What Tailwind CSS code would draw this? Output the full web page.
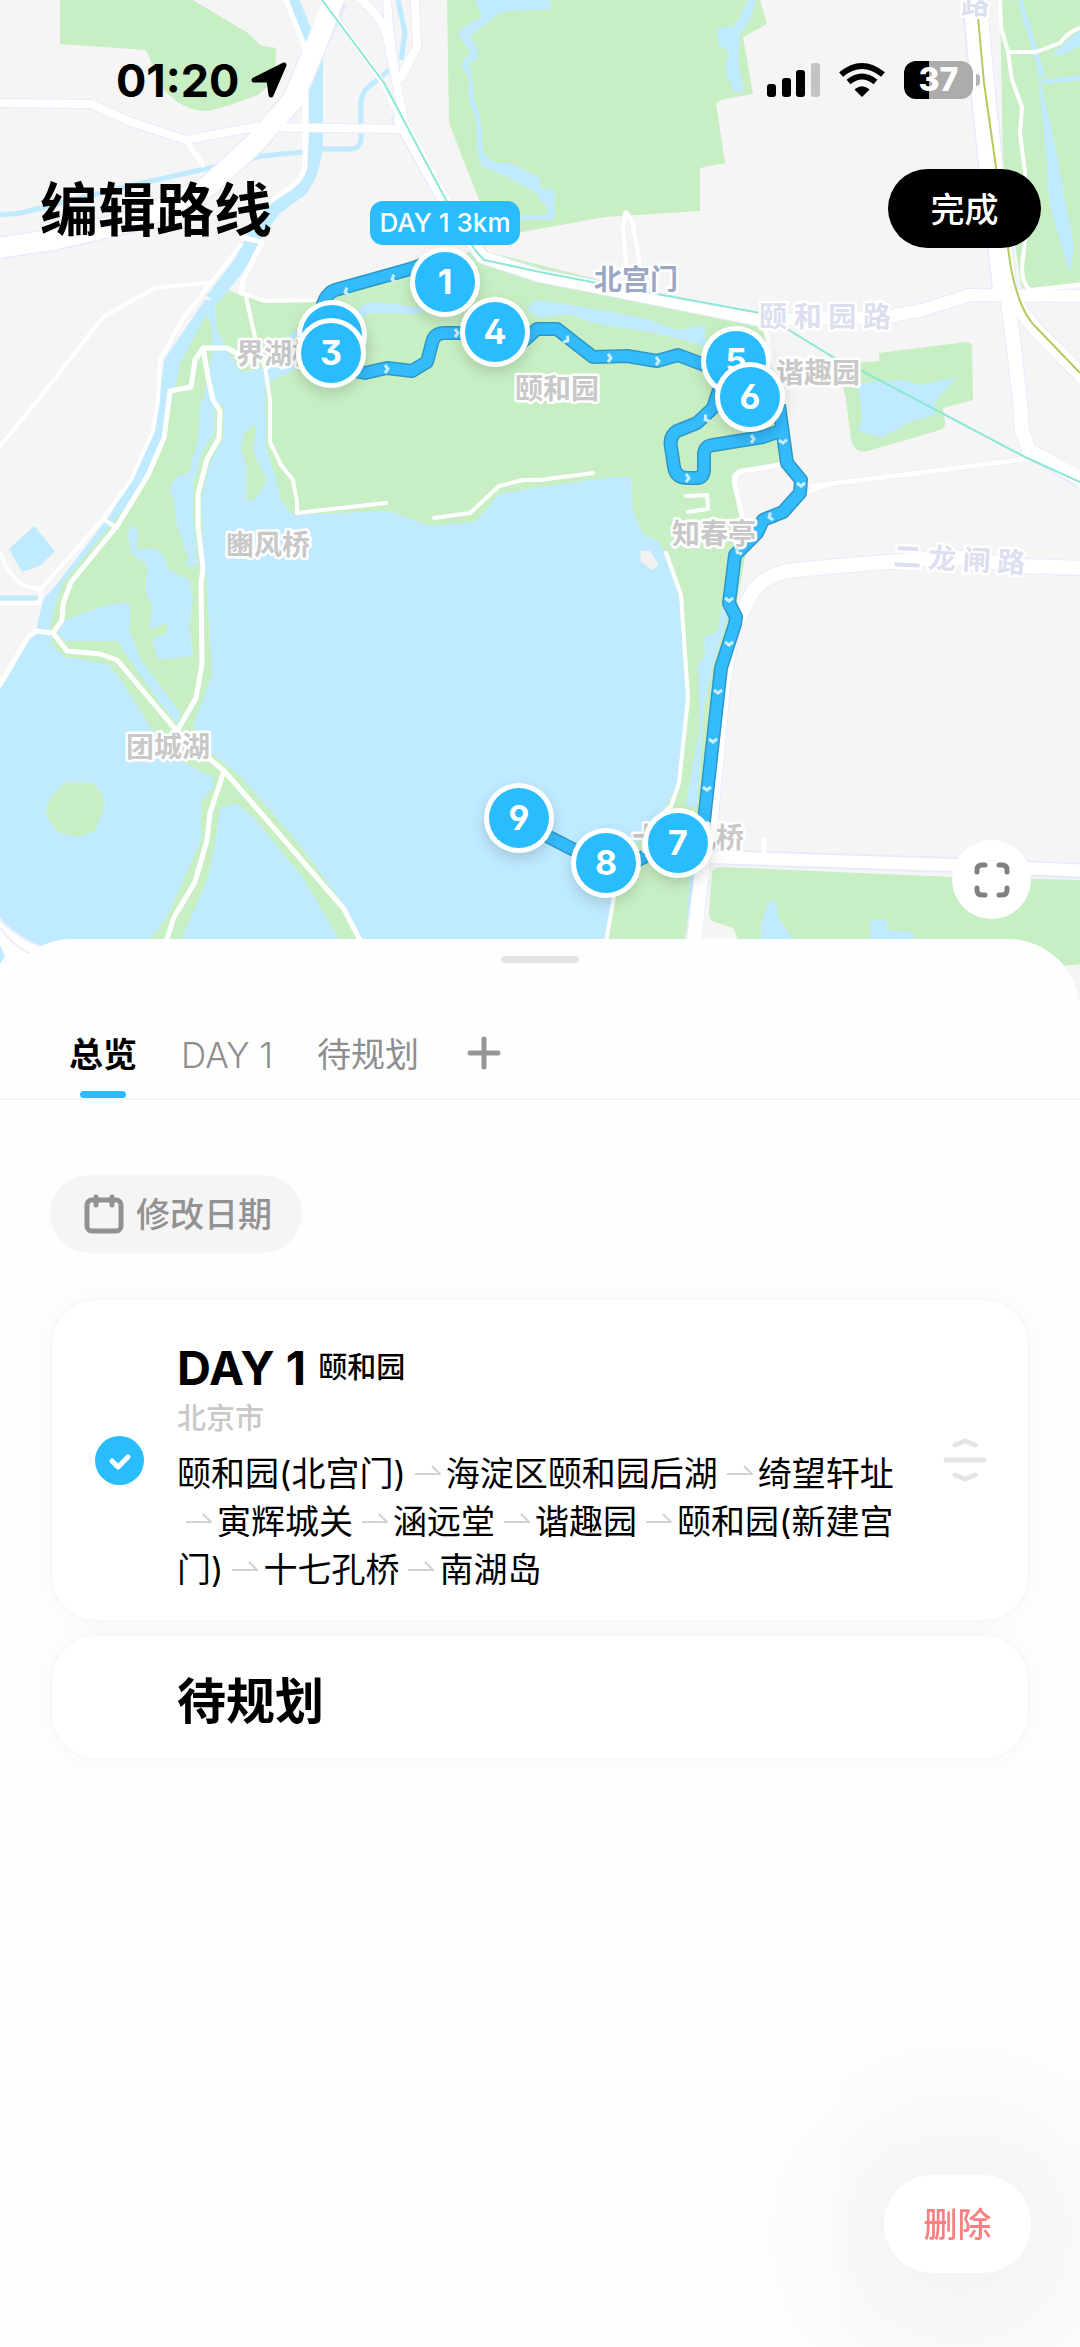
<!DOCTYPE html>
<html lang="zh-CN">
<head>
    <meta charset="UTF-8">
    <meta name="viewport" content="width=device-width, initial-scale=1.0">
    <title>编辑路线</title>
    <script src="https://cdn.jsdelivr.net/npm/@tailwindcss/browser@4"></script>
</head>
<body class="relative min-h-screen bg-[#fefefe] text-black font-['Inter','Noto_Sans_CJK_SC',sans-serif]">
    <!-- Map -->
    <section class="relative">
        <svg class="block w-full" viewBox="0 0 1080 1010" role="img" aria-label="颐和园路线地图">
            <defs>
                <filter id="pinShadow" x="-50%" y="-50%" width="200%" height="200%">
                    <feDropShadow dx="0" dy="6" stdDeviation="7" flood-color="#000" flood-opacity="0.15"/>
                </filter>
            </defs>
            <rect width="1080" height="1010" fill="#f5f5f5"/>

            <!-- Parks -->
            <g fill="#c8efc3">
                <path d="M60 0V44L146 50L153 66L162 88L176 101Q190 111 208 111L227 106L258 95L275 80L276 48L260 45L248 33L193 0Z"/>
                <path d="M447 0L449 123L479 200L500 225L517 233L605 217L700 211V168L725 163L716 103L724 99L753 94L743 37L767 24L760 0Z"/>
                <path d="M1000 0L1003 167L1022 290L1080 282V0Z"/>
                <path d="M862 362L879 361V353L966 342Q972 342 972 347L973 400L943 408L945 422Q946 428 940 430L868 451Q856 455 851 440L846 400L843 387Z"/>
                <path d="M712 872Q714 867 722 867L953 877L1080 880V964L1062 966H760L738 939L733 928L715 922Q709 920 709 912Z"/>
            </g>

            <!-- Lakes of the palace -->
            <path fill="#bfeaff" d="M0 685L26 640L36 630L43 600L60 580L110 515L140 465L158 410L164 360L205 300L300 300L700 440L700 1010H0Z"/>
            <g fill="#c8efc3">
                <path d="M220 287L205 317L180 364L172 400L164 442L148 480L110 526L62 584L57 599L50 626L52 645L65 657L107 664L119 677L153 731L186 764L213 777V787L201 802V840L167 917L150 939H182L188 924L208 878L217 832L220 808L236 803L255 819L303 878L339 939H362L344 905L296 840L241 777L210 752L193 725L196 718L212 675L207 591L203 545L201 500L210 462L224 438L225 405L222 370L240 373L268 367L290 335L330 330L265 385L266 446L275 476L281 500L293 515L389 511L430 526L475 522L499 494L540 487L605 478L631 477L633 511L643 534L657 540L667 557L679 599L686 702L678 783L664 810L643 829L614 897L605 939H686L691 861L702 821L722 668L736 607L746 553L757 526L740 515L733 473L788 465L774 400L769 333L760 320L500 255L476 250L413 268L320 301L265 301L241 295Z"/>
                <path d="M65 782L93 783L103 795L105 806L95 831L79 837L57 832L45 813L50 798Z"/>
            </g>
            <g fill="#bfeaff">
                <path d="M205 305L215 300L217 330L227 350L241 373L268 367L290 335L310 320L330 340L290 372L262 385L238 400L238 409L262 406L265 446L262 520L224 520L224 405L203 400L213 350L212 330Z"/>
                <path d="M201 400L198 438L189 473L176 477L169 490L174 500L177 526L188 557L186 566H198L193 515V484L203 450L214 434V395Z"/>
                <path d="M65 620L100 607L127 602L131 608L129 630L141 660L181 714L177 723L162 706L117 641H65L57 632Z"/>
                <path d="M131 524L139 532L136 549L155 549L163 555L169 570L189 580L193 600L189 625L193 656L158 660L152 639L167 633V623L148 630L153 607L145 591L147 565L131 553L128 534Z"/>
                <path d="M360 307L370 302L395 304L425 309L418 314L372 313L358 319Z"/>
                <path d="M527 310L533 300L560 303L588 308L643 318L678 330L705 325V347L685 340L654 333L592 323L570 314L540 318Z"/>
                <path d="M722 607L717 632L704 637L705 656L698 664L700 729L693 764L686 806H697L704 706L712 668L728 615Z"/>
                <path d="M475 0H550V10L540 10L515 11L499 13L486 24L470 36L478 50L477 60L468 63L472 75L474 100L480 115L484 155L496 163L510 163L540 178V195L520 184L505 176L482 166L477 150L476 120L468 95L469 78L461 66L465 57L472 55L458 34L462 28L482 17Z"/>
                <path d="M540 188L555 190L554 220H514V216L546 215L548 207L538 198Z"/>
                <path d="M717 28L735 26L748 0H756L750 20L740 35L738 60L744 92L734 93L725 70L729 52L718 45Z"/>
                <path d="M1036 60L1056 150L1074 247L1070 273L1050 207L1044 133Z"/>
                <path d="M1052 54L1080 30V46L1062 55Z"/>
                <path d="M857 383L902 380L920 385L957 377L936 400L934 415L910 422L881 438L858 431L862 419L860 400Z"/>
                <path d="M761 939V924L767 905L776 899L778 917L793 939Z"/>
                <path d="M870 939V920L886 919L888 930L912 932L914 939Z"/>
                <path d="M9 549L34 526L55 551L41 565L22 572Z"/>
            </g>
            <path fill="#c8efc3" d="M257 423L253 450L267 480L255 500H246V465L241 450L244 433Z"/>
            <path fill="#f1f1f1" d="M640 551H650L659 565L653 570L641 562Z"/>

            <!-- Rivers -->
            <g fill="none" stroke="#bfeaff">
                <path stroke-width="14" d="M292 0L305 32L316 62V130Q317 170 300 190L275 208L255 235L240 264L212 300"/>
                <path stroke-width="5" d="M398 0L405 33L401 60M389 70L365 90L361 100V140Q359 149 351 149H322M303 152L262 156L213 167L121 188L21 213L0 215M0 598H38M1020 0L1043 77M1042 82L1080 78"/>
            </g>

            <!-- Road casings -->
            <g fill="none" stroke="#e7ecfd" stroke-linejoin="round">
                <path stroke-width="23" d="M337 0L317 43L293 100L255 143L207 187L138 220L52 240L0 248"/>
                <path stroke-width="10" d="M0 103L91 104L131 122L186 140L255 127L403 129M362 0Q384 20 388 40L396 80L405 127M387 0L389 30L396 80M415 0L417 47L401 77"/>
                <path stroke-width="14" d="M396 115L448 207L482 257L540 276L592 286L760 320L888 317L922 310L970 295L1080 296"/>
                <path stroke-width="26" d="M974 0L984 100L998 233L1005 293"/>
                <path stroke-width="16" d="M1005 280L1013 340L1020 400L1022 431L1029 450L1080 480M1005 290L1036 330L1080 375M740 616L753 591Q768 573 795 570L850 565L953 557L1022 566L1080 568M712 857L953 865L1080 871M702 878L693 939"/>
                <path stroke-width="10" d="M736 625L726 687L712 840L702 878"/>
                <path stroke-width="6" d="M626 263L623 227L626 213L633 223L640 267M812 486L919 473L1026 459M781 465L743 471Q733 473 735 484L742 515M800 495L826 485M766 330L774 367M324 0L379 77L400 120"/>
            </g>

            <!-- Roads -->
            <g fill="none" stroke="#fff" stroke-linejoin="round" stroke-linecap="round">
                <path stroke-width="20" d="M337 -10L317 43L293 100L255 143L207 187L138 220L52 240L-10 249"/>
                <path stroke-width="8" d="M0 103L91 104L131 122L186 140L255 127L403 129M362 0Q384 20 388 40L396 80L405 127M387 0L389 30L396 80M415 0L417 47L401 77M736 625L726 687L712 840L702 878"/>
                <path stroke-width="12" d="M400 120L448 207L482 257L540 276L592 286L760 320L888 317L922 310L970 295L1080 296M712 857L953 865L1090 871"/>
                <path stroke-width="23" d="M974 -10L984 100L998 233L1005 290"/>
                <path stroke-width="14" d="M1005 280L1013 340L1020 400L1022 431L1029 450L1090 484M1005 290L1036 330L1090 384M740 616L753 591Q768 573 795 570L850 565L953 557L1022 566L1090 568M702 870L693 950"/>
                <path stroke-width="5" d="M286 0L305 47V167Q302 180 290 188L262 207L252 222M188 143L203 165M244 238L262 242L243 280L241 293M324 0L379 77L400 120M626 263L623 227L626 213L633 223L640 267M812 486L919 473L1026 459M781 465L743 471Q733 473 735 484L742 515M800 495L826 485M766 330L774 367M764 840V857"/>
                <path stroke-width="4" d="M241 245L213 280L182 320L160 360L158 400L153 431L131 480L103 519L41 589L40 603H0M0 553Q8 574 21 584L40 590M103 519L117 528M207 283L155 288L103 317L38 400L0 446"/>
                <path stroke-width="5" d="M169 400L164 438L148 475L117 526L71 582L63 604L62 620L53 633M169 400L170 391L191 387L195 360L203 348H227L240 355M203 348L208 377L213 400L220 411L219 438L207 459L198 494V526L203 568L201 584L202 664L196 698L177 731"/>
                <path stroke-width="5" d="M0 685L28 637L36 631L53 633L67 651L100 654L117 660L177 731L224 771L241 790L344 909L364 948M224 771L210 813L207 840L195 882L174 917L164 948"/>
                <path stroke-width="4" d="M241 293L265 301L320 300M246 297L255 337L265 367L270 400V442L281 465L293 480L297 502V513L350 507L386 503M434 518L470 513L499 486L523 480H540L593 473M666 553L681 595L688 698L679 783L671 806L640 835M614 897L605 948M686 496L707 495L708 509L688 512"/>
                <path stroke-width="4" d="M1000 0L1001 27L1008 52L1012 80L1022 107L1020 133L1025 173V240L1022 267Q1022 284 1030 290L1080 285M1008 52L1036 52L1060 43Q1068 32 1080 28"/>
            </g>
            <!-- Corner interchange -->
            <path fill="#fff" d="M0 918Q20 940 42 946V1010H0Z"/>
            <path fill="none" stroke="#eaeefa" stroke-width="2" d="M0 920Q18 938 42 947M0 928Q14 946 30 954"/>
            <path fill="#bfeaff" d="M0 945L5 956L0 964Z"/>

            <!-- Rail lines -->
            <path fill="none" stroke="#8ce8d4" stroke-width="2" d="M322 0L384 83L446 200L475 250L484 260L540 272L597 283L760 313L784 327L833 357L864 372L917 400L1025 457L1080 482"/>
            <path fill="none" stroke="#b3cc5c" stroke-width="2" d="M978 17L984 83L996 167L1008 247Q1014 300 1032 323L1080 373"/>

            <!-- Route -->
            <g fill="none" stroke-linejoin="round">
                <path stroke="#2d97c9" stroke-width="14" d="M430 262L410 269L335 290Q322 295 320 320M355 371L365 373L387 368L412 371L427 362L432 343Q434 333 445 333H470M520 344L537 329H557L593 357L627 356L657 361L678 355L715 369M719 390L713 408L697 423L677 431Q669 436 671 447L674 467Q676 478 688 478H698Q704 477 704 468V455Q704 446 713 445L763 437L780 431M779 405L787 463L801 480L800 493L783 512L763 520L757 533L735 555L729 603L736 617L735 624L721 668L703 830M547 836L580 853M630 864L652 853"/>
                <path stroke="#33bbfc" stroke-width="11" d="M430 262L410 269L335 290Q322 295 320 320M355 371L365 373L387 368L412 371L427 362L432 343Q434 333 445 333H470M520 344L537 329H557L593 357L627 356L657 361L678 355L715 369M719 390L713 408L697 423L677 431Q669 436 671 447L674 467Q676 478 688 478H698Q704 477 704 468V455Q704 446 713 445L763 437L780 431M779 405L787 463L801 480L800 493L783 512L763 520L757 533L735 555L729 603L736 617L735 624L721 668L703 830M547 836L580 853M630 864L652 853"/>
            </g>

            <!-- Place names -->
            <g class="text-[28px] font-bold" fill="#c8c8c8" stroke="#fff" stroke-width="5" stroke-linejoin="round" paint-order="stroke">
                <text x="236" y="364">界湖桥</text>
                <text x="515" y="399">颐和园</text>
                <text x="776" y="383">谐趣园</text>
                <text x="226" y="555">豳风桥</text>
                <text x="126" y="757">团城湖</text>
                <text x="672" y="544">知春亭</text>
                <text x="632" y="848">十七孔桥</text>
                <text x="594" y="290" fill="#9ca7c4">北宫门</text>
                <g fill="#dcdff0">
                    <text x="759" y="327">颐 和 园 路</text>
                    <text x="893" y="566" transform="rotate(3 894 566)">二 龙 闸 路</text>
                    <text x="961" y="14">路</text>
                </g>
            </g>
            <g id="chevrons" fill="none" stroke="#c9eeff" stroke-width="3"></g>

            <!-- Pins -->
            <g id="pins"></g>
            <rect x="370" y="201" width="150" height="44" rx="13" fill="#29bcfe"/>
            <text class="text-[26px] font-medium" x="445" y="232" text-anchor="middle" fill="#fff">DAY 1 3km</text>
        </svg>

        <header class="absolute inset-x-0 top-0">
            <!-- Status bar -->
            <div class="mt-[54px] flex h-[52px] items-center justify-between pr-[100px] pl-[116px]">
                <div class="flex items-center gap-3">
                    <span class="text-[45px] leading-none font-bold">01:20</span>
                    <svg class="h-9 w-9" viewBox="0 0 36 36" stroke="#000" stroke-width="5" stroke-linejoin="round"><path d="M3 18L33 3L20 33L18 18Z"/></svg>
                </div>
                <div class="flex items-center gap-[18px]">
                    <svg class="h-9 w-[54px]" viewBox="0 0 54 36">
                        <rect x="1" y="22" width="9" height="13" rx="3"/>
                        <rect x="16" y="16" width="9" height="19" rx="3"/>
                        <rect x="30" y="8" width="9" height="27" rx="3"/>
                        <rect x="45" y="1" width="9" height="34" rx="3" fill="#c4c4c4"/>
                    </svg>
                    <svg class="h-9 w-12" viewBox="0 0 48 36" fill="none" stroke="#000" stroke-width="6">
                        <path d="M3 12.500Q24 -4.500 45 12.500M10.500 20Q24 9 37.500 20"/>
                        <path d="M24 34L17.500 27.500Q24 22.500 30.500 27.500Z" fill="#000" stroke-width="1.500" stroke-linejoin="round"/>
                    </svg>
                    <div class="flex items-center gap-[3px]">
                        <span class="flex h-[38px] w-[69px] items-center justify-center rounded-xl bg-linear-to-r from-black from-36% to-[#acacac] to-36% text-[32px] leading-none font-extrabold text-white">37</span>
                        <span class="h-3 w-1 rounded-r-full bg-[#b4b4b4]"></span>
                    </div>
                </div>
            </div>
            <div class="mt-[62px] flex h-20 items-center justify-between pr-[39px] pl-10">
                <h1 class="pt-1 text-[58px] leading-none font-bold">编辑路线</h1>
                <button type="button" class="h-[79px] w-[153px] rounded-full bg-black pt-[2px] text-[34px] font-medium text-white">完成</button>
            </div>
        </header>

        <button type="button" aria-label="全屏" class="absolute right-[49px] bottom-[91px] flex size-[79px] items-center justify-center rounded-full bg-white">
            <svg class="size-9" viewBox="0 0 36 36" fill="none" stroke="#808080" stroke-width="5" stroke-linecap="round"><path d="M3 10V8Q3 3 8 3H11M25 3H28Q33 3 33 8V10M33 26V28Q33 33 28 33H25M11 33H8Q3 33 3 28V26"/></svg>
        </button>
    </section>

    <!-- Bottom sheet -->
    <main class="relative -mt-[71px] rounded-t-[72px] bg-[#fefefe] pt-[17px]">
        <div class="mx-auto h-[7px] w-[78px] rounded-full bg-[#e4e4e4]"></div>

        <nav class="mt-[52px] flex h-[85px] items-start gap-11 border-b-2 border-[#f4f4f4] pl-[69px] text-[34px] leading-[80px] text-[#8e8e8e]">
            <button type="button" class="relative font-bold text-black">总览<span class="absolute top-[76px] left-1/2 h-[7px] w-[46px] -translate-x-1/2 rounded-full bg-[#29bcfe]"></span></button>
            <button type="button" class="text-[35px] font-light">DAY 1</button>
            <button type="button">待规划</button>
            <button type="button" aria-label="添加" class="flex h-[75px] items-center pl-1">
                <svg class="size-[34px]" viewBox="0 0 34 34" stroke="#959595" stroke-width="5" stroke-linecap="round"><path d="M17 3V31M3 17H31"/></svg>
            </button>
        </nav>

        <div class="px-[50px] pt-[75px]">
            <button type="button" class="flex h-[78px] items-center gap-3 rounded-full bg-[#f5f5f5] pr-[30px] pl-[34px] text-[34px] font-medium text-[#929292]">
                <svg class="size-[40px]" viewBox="0 0 40 40" fill="none" stroke="#929292" stroke-width="5" stroke-linecap="round"><rect x="3" y="6" width="34" height="31" rx="5"/><path d="M12 3V11M28 3V11"/></svg>
                修改日期
            </button>

            <!-- Day 1 -->
            <article class="mt-[45px] flex items-center rounded-[48px] border-2 border-[#f8f8f8] bg-white py-[26px] pr-[41px] pl-[43px] shadow-[0_0_30px_rgba(0,0,0,0.03)]">
                <label class="relative size-[49px] shrink-0">
                    <input type="checkbox" checked aria-label="选择 DAY 1" class="block size-[49px] appearance-none rounded-full bg-[#29bcfe]">
                    <svg class="pointer-events-none absolute inset-0 size-full" viewBox="0 0 49 49" fill="none" stroke="#fff" stroke-width="5" stroke-linecap="round" stroke-linejoin="round"><path d="M17 25L23 31L33 21"/></svg>
                </label>
                <div class="ml-[33px] w-[732px] pt-[10px]">
                    <h2 class="flex h-[62px] items-center gap-3 text-[47px] leading-none font-bold">DAY 1 <span class="text-[29px] font-medium">颐和园</span></h2>
                    <p class="text-[29px] leading-[42px] font-medium text-[#c8c8c8]">北京市</p>
                    <p id="stops" class="mt-[10px] text-[34px] leading-[48px]"></p>
                </div>
                <button type="button" aria-label="拖动排序" class="ml-auto">
                    <svg class="h-[44px] w-[44px]" viewBox="0 0 44 44" fill="none" stroke="#e4e4e4" stroke-width="5" stroke-linecap="round" stroke-linejoin="round"><path d="M3 22H41M12 7L22 3L32 7M12 37L22 41L32 37"/></svg>
                </button>
            </article>

            <!-- Unplanned -->
            <article class="mt-[12px] flex h-[126px] items-center rounded-[48px] border-2 border-[#f8f8f8] bg-white pl-[125px] shadow-[0_0_30px_rgba(0,0,0,0.03)]">
                <h2 class="pt-2 text-[49px] leading-none font-bold">待规划</h2>
            </article>
        </div>
    </main>

    <button type="button" class="fixed right-[49px] bottom-[74px] h-[98px] w-[147px] rounded-full bg-white text-[34px] font-medium text-[#f88080] shadow-[0_10px_200px_rgba(0,0,0,0.22)]">删除</button>

    <script>
        const pins = [
            { n: '', x: 332, y: 335 },
            { n: 3, x: 331, y: 353 },
            { n: 1, x: 445, y: 282 },
            { n: 4, x: 495, y: 332 },
            { n: 5, x: 736, y: 361 },
            { n: 6, x: 750, y: 397 },
            { n: 9, x: 519, y: 818 },
            { n: 8, x: 606, y: 863 },
            { n: 7, x: 678, y: 843 }
        ];

        document.getElementById('pins').innerHTML = pins.map(p => `
            <g transform="translate(${p.x} ${p.y})">
                <circle r="35" fill="#fff" filter="url(#pinShadow)"/>
                <circle r="30" fill="#29bcfe"/>
                <text y="12" text-anchor="middle" fill="#fff" class="text-[34px] font-bold [font-feature-settings:'ss01']">${p.n}</text>
            </g>
        `).join('');

        // x, y, heading in degrees
        const chevrons = [
            [393, 279, 165], [346, 292, 165], [387, 369, 0], [457, 333, 0], [567, 340, 35],
            [610, 358, 0], [658, 361, 0], [706, 419, 150], [753, 439, 0], [688, 478, 0],
            [783, 442, 85], [801, 485, 90], [770, 517, 160], [738, 552, 140], [729, 600, 90],
            [729, 644, 90], [718, 692, 90], [713, 741, 90], [707, 789, 90]
        ];

        document.getElementById('chevrons').innerHTML = chevrons.map(([x, y, a]) =>
            `<path d="M-2 -4L1 0L-2 4" transform="translate(${x} ${y}) rotate(${a})"/>`
        ).join('');

        const stops = ['颐和园(北宫门)', '海淀区颐和园后湖', '绮望轩址', '寅辉城关', '涵远堂', '谐趣园', '颐和园(新建宫门)', '十七孔桥', '南湖岛'];
        const arrow = `<svg class="mr-1 ml-2 inline-block h-4 w-7 align-[7px]" viewBox="0 0 28 16" fill="none" stroke="#d2d2d2" stroke-width="2" stroke-linejoin="round"><path d="M1 11H26L18 3"/></svg>`;
        document.getElementById('stops').innerHTML = stops.join(arrow);
    </script>
</body>
</html>
